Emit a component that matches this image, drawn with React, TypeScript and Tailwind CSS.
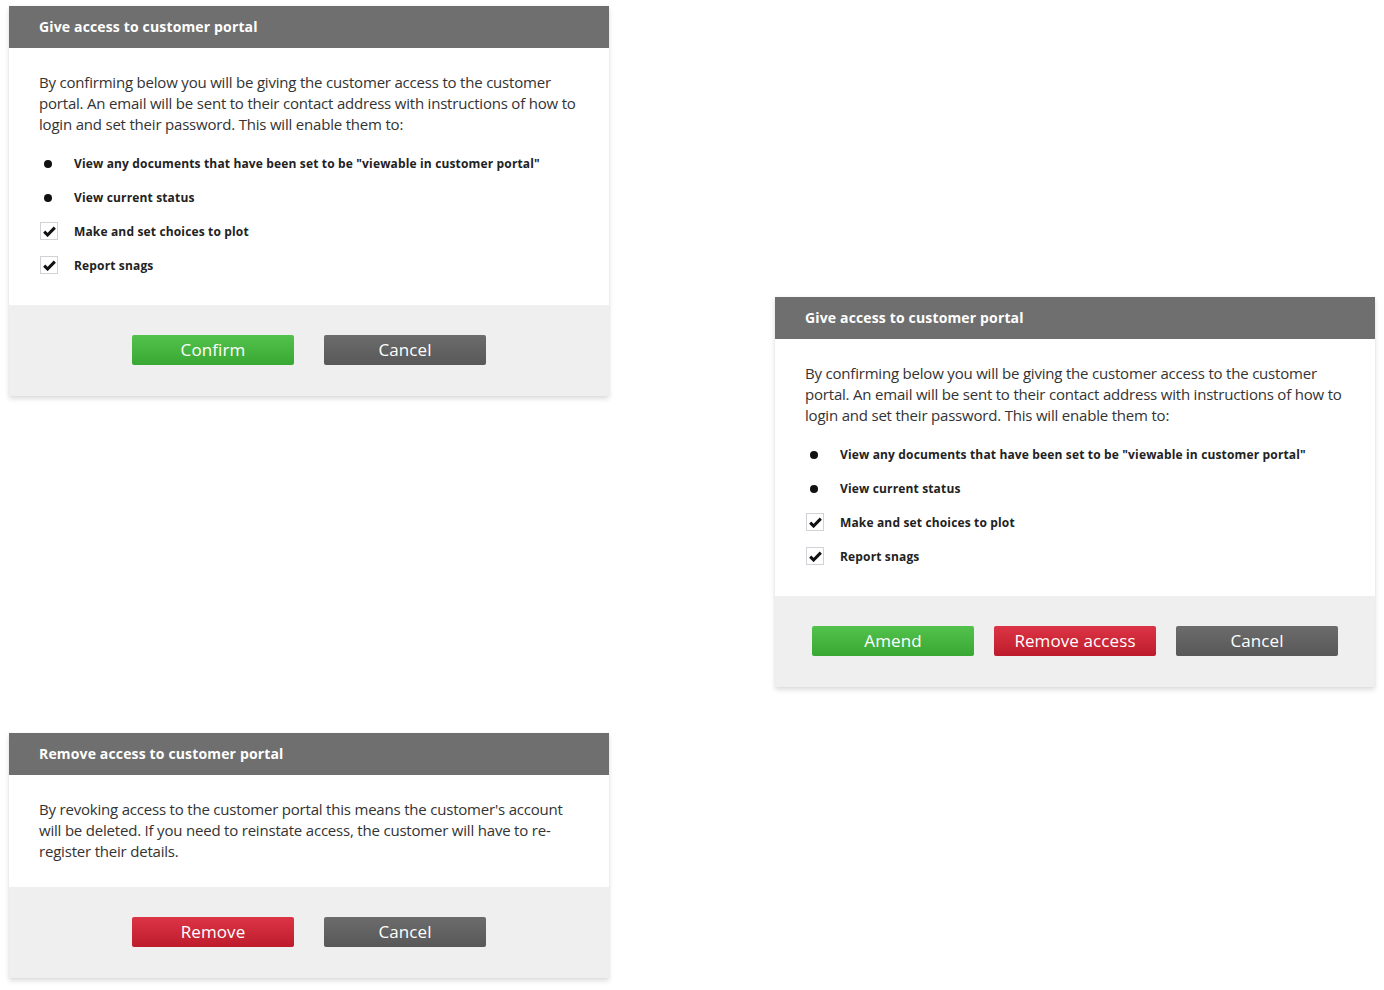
import React from "react"

type Item = { text: string; kind: "dot" | "check" }

const items: Item[] = [
  { text: 'View any documents that have been set to be "viewable in customer portal"', kind: "dot" },
  { text: "View current status", kind: "dot" },
  { text: "Make and set choices to plot", kind: "check" },
  { text: "Report snags", kind: "check" },
]

const btnColors = {
  green: "bg-gradient-to-b from-[#53c24d] to-[#39a833]",
  red: "bg-gradient-to-b from-[#dc3446] to-[#bd1b2b]",
  gray: "bg-gradient-to-b from-[#6c6c6c] to-[#585858]",
}

function Btn({ label, color }: { label: string; color: keyof typeof btnColors }) {
  return (
    <button
      className={`${btnColors[color]} h-[30px] w-[162px] rounded-[2px] pb-[1px] text-[17px] leading-[28px] tracking-[0.1px] text-white`}
    >
      {label}
    </button>
  )
}

function Dialog({
  title,
  children,
  buttons,
  gap,
}: {
  title: string
  children: React.ReactNode
  buttons: { label: string; color: keyof typeof btnColors }[]
  gap: string
}) {
  return (
    <div className="w-[600px] bg-white shadow-[0_3px_5px_rgba(0,0,0,0.13),0_0_2px_rgba(0,0,0,0.06)]">
      <div className="flex h-[42px] items-center bg-[#6f6f6f] px-[30px] pb-[1px] text-[14px] font-bold tracking-[0.15px] text-white">
        {title}
      </div>
      <div className="px-[30px]">{children}</div>
      <div className={`flex justify-center ${gap} bg-[#efefef] pt-[30px] pb-[31px]`}>
        {buttons.map((b) => (
          <Btn key={b.label} {...b} />
        ))}
      </div>
    </div>
  )
}

function Check() {
  return (
    <span className="flex h-[18px] w-[18px] items-center justify-center border border-[#cfd3d8] bg-white">
      <svg width="13" height="11" viewBox="0 0 13 11">
        <path d="M1.2 5.6 L4.6 9 L11.8 1.6" fill="none" stroke="#111" strokeWidth="3" strokeLinejoin="miter" />
      </svg>
    </span>
  )
}

function GiveAccessBody() {
  return (
    <div className="pt-[24px] pb-[23px]">
      <p className="text-[15px] leading-[21px] tracking-[-0.2px] text-[#333]">
        By confirming below you will be giving the customer access to the customer portal. An email will be sent to their
        contact address with instructions of how to login and set their password. This will enable them to:
      </p>
      <ul className="mt-[11px]">
        {items.map((it) => (
          <li key={it.text} className="flex h-[34px] items-center pt-[2px]">
            <span className="flex w-[35px] shrink-0 items-center">
              {it.kind === "dot" ? (
                <span className="ml-[5px] h-[8px] w-[8px] rounded-full bg-[#111]" />
              ) : (
                <span className="ml-[1px] -mt-[2px]">
                  <Check />
                </span>
              )}
            </span>
            <span className="text-[12px] font-bold tracking-[0.15px] text-[#222]">{it.text}</span>
          </li>
        ))}
      </ul>
    </div>
  )
}

export default function App() {
  return (
    <div
      className="flex min-h-[990px] w-[1384px] bg-white"
      style={{ fontFamily: '"Open Sans", "Liberation Sans", sans-serif' }}
    >
      <div className="ml-[9px] flex flex-col pt-[6px]">
        <Dialog
          title="Give access to customer portal"
          gap="gap-[30px]"
          buttons={[
            { label: "Confirm", color: "green" },
            { label: "Cancel", color: "gray" },
          ]}
        >
          <GiveAccessBody />
        </Dialog>
        <div className="mt-[337px]">
          <Dialog
            title="Remove access to customer portal"
            gap="gap-[30px]"
            buttons={[
              { label: "Remove", color: "red" },
              { label: "Cancel", color: "gray" },
            ]}
          >
            <p className="pt-[24px] pb-[25px] text-[15px] leading-[21px] tracking-[-0.2px] text-[#333]">
              By revoking access to the customer portal this means the customer's account will be deleted. If you need to
              reinstate access, the customer will have to re-register their details.
            </p>
          </Dialog>
        </div>
      </div>
      <div className="ml-[166px] pt-[297px]">
        <Dialog
          title="Give access to customer portal"
          gap="gap-[20px]"
          buttons={[
            { label: "Amend", color: "green" },
            { label: "Remove access", color: "red" },
            { label: "Cancel", color: "gray" },
          ]}
        >
          <GiveAccessBody />
        </Dialog>
      </div>
    </div>
  )
}
